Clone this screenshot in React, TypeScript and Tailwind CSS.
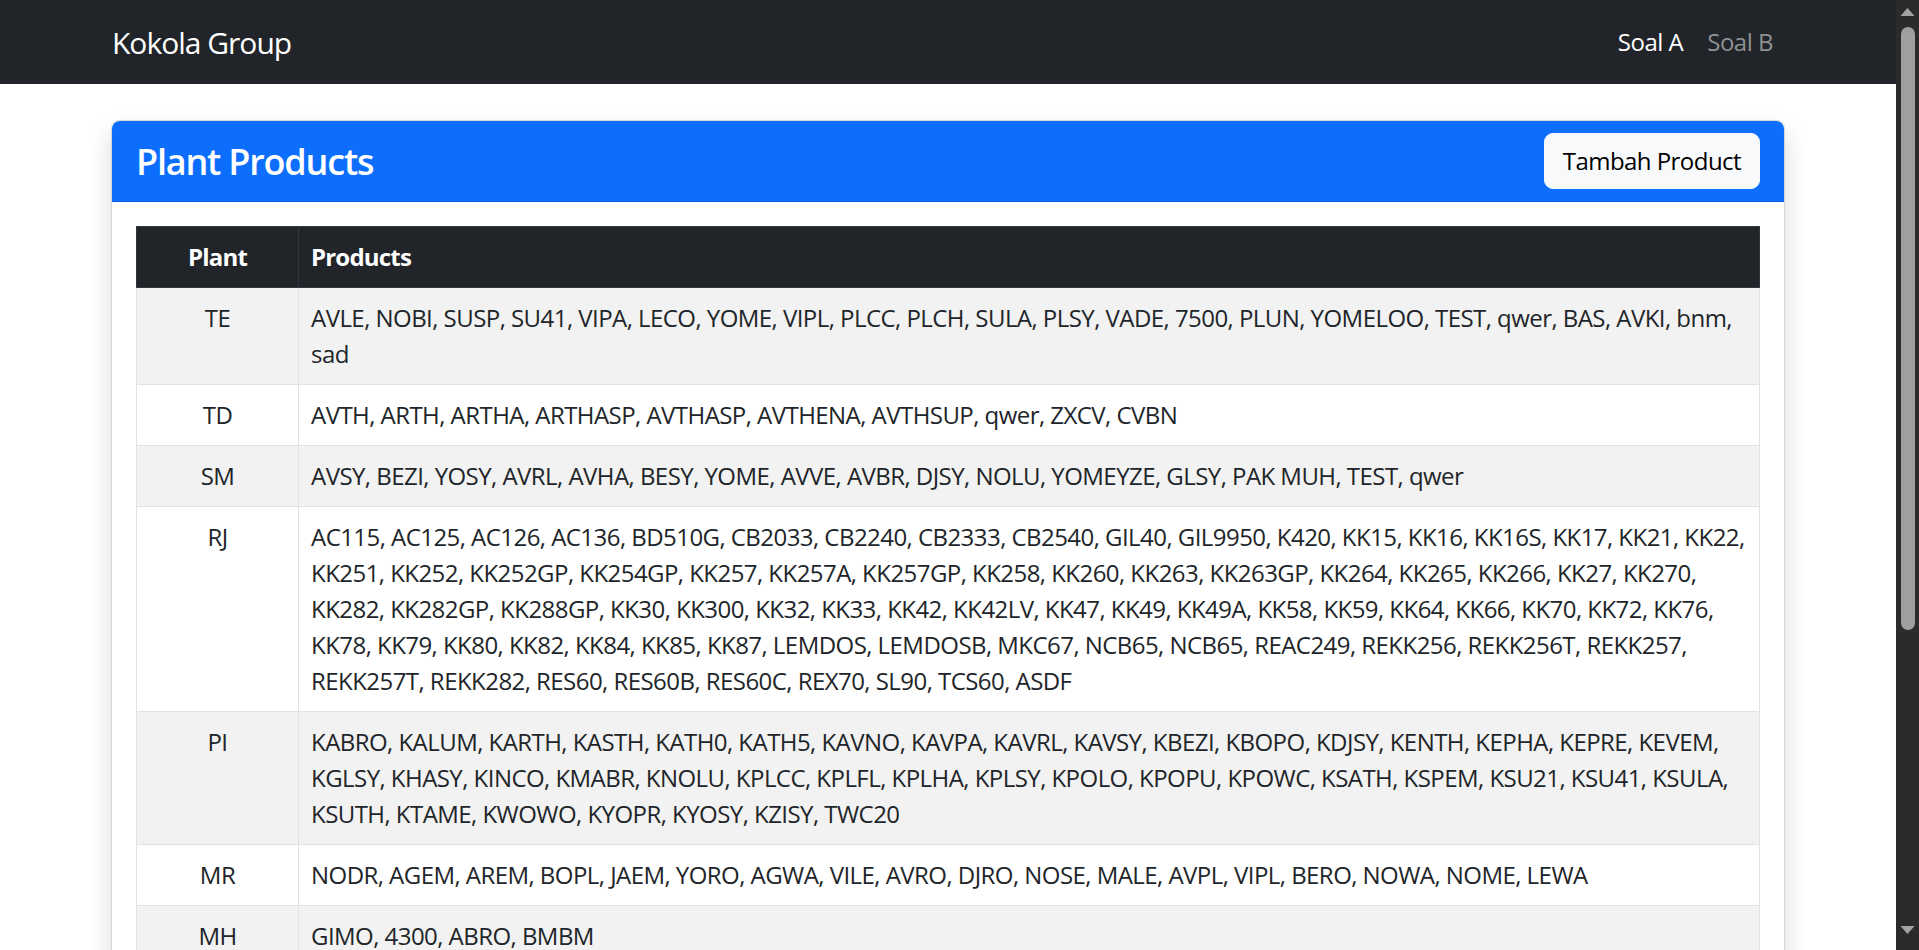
import React from "react";

type Row = { plant: string; lines: string[] };

const rows: Row[] = [
  {
    plant: "TE",
    lines: [
      "AVLE, NOBI, SUSP, SU41, VIPA, LECO, YOME, VIPL, PLCC, PLCH, SULA, PLSY, VADE, 7500, PLUN, YOMELOO, TEST, qwer, BAS, AVKI, bnm,",
      "sad",
    ],
  },
  {
    plant: "TD",
    lines: ["AVTH, ARTH, ARTHA, ARTHASP, AVTHASP, AVTHENA, AVTHSUP, qwer, ZXCV, CVBN"],
  },
  {
    plant: "SM",
    lines: [
      "AVSY, BEZI, YOSY, AVRL, AVHA, BESY, YOME, AVVE, AVBR, DJSY, NOLU, YOMEYZE, GLSY, PAK MUH, TEST, qwer",
    ],
  },
  {
    plant: "RJ",
    lines: [
      "AC115, AC125, AC126, AC136, BD510G, CB2033, CB2240, CB2333, CB2540, GIL40, GIL9950, K420, KK15, KK16, KK16S, KK17, KK21, KK22,",
      "KK251, KK252, KK252GP, KK254GP, KK257, KK257A, KK257GP, KK258, KK260, KK263, KK263GP, KK264, KK265, KK266, KK27, KK270,",
      "KK282, KK282GP, KK288GP, KK30, KK300, KK32, KK33, KK42, KK42LV, KK47, KK49, KK49A, KK58, KK59, KK64, KK66, KK70, KK72, KK76,",
      "KK78, KK79, KK80, KK82, KK84, KK85, KK87, LEMDOS, LEMDOSB, MKC67, NCB65, NCB65, REAC249, REKK256, REKK256T, REKK257,",
      "REKK257T, REKK282, RES60, RES60B, RES60C, REX70, SL90, TCS60, ASDF",
    ],
  },
  {
    plant: "PI",
    lines: [
      "KABRO, KALUM, KARTH, KASTH, KATH0, KATH5, KAVNO, KAVPA, KAVRL, KAVSY, KBEZI, KBOPO, KDJSY, KENTH, KEPHA, KEPRE, KEVEM,",
      "KGLSY, KHASY, KINCO, KMABR, KNOLU, KPLCC, KPLFL, KPLHA, KPLSY, KPOLO, KPOPU, KPOWC, KSATH, KSPEM, KSU21, KSU41, KSULA,",
      "KSUTH, KTAME, KWOWO, KYOPR, KYOSY, KZISY, TWC20",
    ],
  },
  {
    plant: "MR",
    lines: [
      "NODR, AGEM, AREM, BOPL, JAEM, YORO, AGWA, VILE, AVRO, DJRO, NOSE, MALE, AVPL, VIPL, BERO, NOWA, NOME, LEWA",
    ],
  },
  { plant: "MH", lines: ["GIMO, 4300, ABRO, BMBM"] },
];

function Scrollbar() {
  return (
    <div className="flex h-full w-[23px] shrink-0 flex-col items-center bg-[#2b2b2b]">
      <svg width="15" height="27" viewBox="0 0 15 27" className="shrink-0">
        <polygon points="0.5,16 7.5,8 14.5,16" fill="#a3a3a3" />
      </svg>
      <div className="h-[603px] w-[14px] shrink-0 rounded-full bg-[#9f9f9f]" />
      <div className="flex-1" />
      <svg width="15" height="16" viewBox="0 0 15 16" className="mb-[8px] shrink-0">
        <polygon points="0.5,0 14.5,0 7.5,8" fill="#a3a3a3" />
      </svg>
    </div>
  );
}

export default function App() {
  return (
    <div className="flex h-[950px] w-[1919px] overflow-hidden bg-white font-['Open_Sans','Noto_Sans',sans-serif] text-[#212529]">
      <div className="min-w-0 flex-1 overflow-hidden">
        <nav className="flex h-[84px] items-center bg-[#212529]">
          <div className="mx-auto flex w-[1710px] items-center justify-between px-[18px]">
            <span className="pl-[1px] text-[30px] leading-[45px] tracking-[-1px] text-white">Kokola Group</span>
            <div className="flex items-center tracking-[-0.5px]">
              <span className="px-[12px] text-[24px] leading-[36px] text-white">Soal A</span>
              <span className="px-[12px] text-[24px] leading-[36px] text-[#8f9193]">Soal B</span>
            </div>
          </div>
        </nav>

        <div className="mx-auto mt-[36px] w-[1710px] px-[18px]">
          <div className="overflow-hidden rounded-[9px] border border-[#d5d6d7] bg-white shadow-[0_12px_24px_rgba(0,0,0,0.15)]">
            <div className="flex items-center justify-between border-b border-[#0b5ed7] bg-[#0d6efd] px-[24px] py-[12px]">
              <h4 className="text-[36px] font-semibold leading-[43px] tracking-[-1.2px] text-white">Plant Products</h4>
              <button className="h-[56px] rounded-[9px] border border-[#f8f9fa] bg-[#f8f9fa] px-[18px] text-[24px] leading-[36px] tracking-[-0.55px] text-black">
                Tambah Product
              </button>
            </div>
            <div className="p-[24px]">
              <table className="w-full table-fixed border-collapse text-[24px] leading-[36px] tracking-[-0.55px]">
                <colgroup>
                  <col className="w-[162px]" />
                  <col />
                </colgroup>
                <thead>
                  <tr className="bg-[#212529] text-white">
                    <th className="border border-[#32383e] px-[12px] py-[12px] text-center font-bold tracking-[-0.8px]">
                      Plant
                    </th>
                    <th className="border border-[#32383e] px-[12px] py-[12px] text-left font-bold tracking-[-0.8px]">
                      Products
                    </th>
                  </tr>
                </thead>
                <tbody>
                  {rows.map((r, i) => (
                    <tr key={r.plant} className={i % 2 === 0 ? "bg-[#f2f2f2]" : "bg-white"}>
                      <td className="border border-[#dee2e6] px-[12px] py-[12px] text-center align-top">
                        {r.plant}
                      </td>
                      <td className="border border-[#dee2e6] px-[12px] py-[12px] text-left align-top">
                        {r.lines.map((l, j) => (
                          <div key={j} className="whitespace-nowrap">
                            {l}
                          </div>
                        ))}
                      </td>
                    </tr>
                  ))}
                </tbody>
              </table>
            </div>
          </div>
        </div>
      </div>
      <Scrollbar />
    </div>
  );
}
